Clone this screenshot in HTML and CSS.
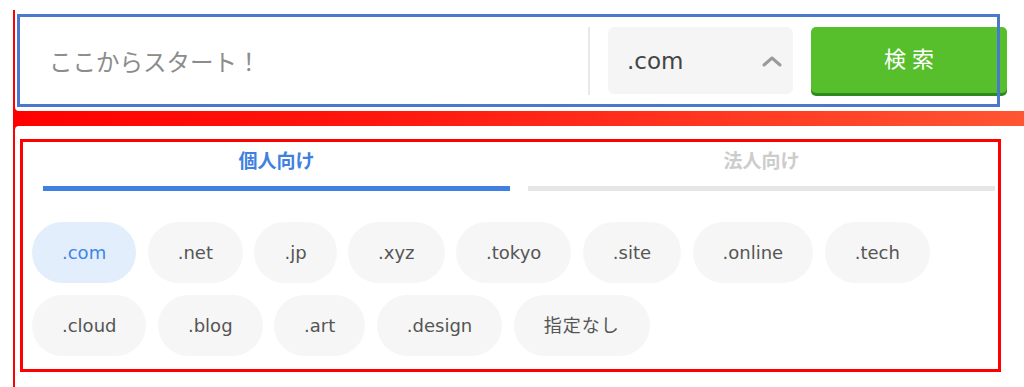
FILE: index.html
```html
<!DOCTYPE html>
<html lang="ja">
<head>
    <meta charset="UTF-8">
    <meta name="viewport" content="width=device-width, initial-scale=1.0">
    <title>ドメイン検索</title>
    <link rel="stylesheet" href="styles.css">
</head>
<body>

    <div class="domain-search">
        <!-- search bar -->
        <form class="search-bar" onsubmit="return false;">
            <input type="text" class="search-input" placeholder="ここからスタート！">
            <div class="tld-select">
                <span class="tld-select-value">.com</span>
                <svg class="tld-select-arrow" width="20" height="12" viewBox="0 0 20 12">
                    <polyline points="2,10 10,3 18,10" fill="none" stroke="#9a9a9a" stroke-width="3" stroke-linecap="round" stroke-linejoin="round"/>
                </svg>
            </div>
            <button type="submit" class="search-btn">検索</button>
            <span class="note-box note-blue"></span>
        </form>

        <!-- tld picker -->
        <div class="tld-panel">
            <div class="tabs">
                <div class="tab tab-active">個人向け</div>
                <div class="tab">法人向け</div>
            </div>
            <div class="chips">
                <span class="chip chip-active">.com</span>
                <span class="chip">.net</span>
                <span class="chip">.jp</span>
                <span class="chip">.xyz</span>
                <span class="chip">.tokyo</span>
                <span class="chip">.site</span>
                <span class="chip">.online</span>
                <span class="chip">.tech</span>
                <span class="chip">.cloud</span>
                <span class="chip">.blog</span>
                <span class="chip">.art</span>
                <span class="chip">.design</span>
                <span class="chip chip-jp">指定なし</span>
            </div>
            <span class="note-box note-red"></span>
        </div>
    </div>

</body>
</html>
```

FILE: styles.css
```css
body {
    margin: 0;
    font-family: "Noto Sans CJK JP", sans-serif;
    background-color: #FFFFFF;
}

.domain-search {
    display: flex;
    flex-direction: column;
    gap: 15px;
    margin: 10px 0 0 13px;
    padding-left: 2px;
    min-height: 377px;
    background: linear-gradient(90deg, #FF0000 0%, #FF1A10 40%, #FF5533 100%);
}

.search-bar {
    position: relative;
    display: flex;
    align-items: center;
    height: 101px;
    margin: 0;
    padding-right: 17px;
    background-color: #FFFFFF;
    border-radius: 0 0 0 4px;
}

.search-input {
    flex: 1;
    height: 68px;
    padding: 0 0 0 34px;
    border: none;
    border-right: 2px solid #E8E8E8;
    outline: none;
    font: inherit;
    font-size: 23.5px;
    color: #333333;
    background: transparent;
}

.search-input::placeholder {
    color: #8C8C8C;
}

.tld-select {
    display: flex;
    align-items: center;
    justify-content: space-between;
    box-sizing: border-box;
    width: 185px;
    height: 67px;
    margin-left: 18px;
    padding: 0 11px 0 19px;
    border-radius: 6px;
    background-color: #F5F5F5;
    font-family: "DejaVu Sans", "Noto Sans CJK JP", sans-serif;
    font-size: 23px;
    color: #444444;
}

.search-btn {
    width: 196px;
    height: 66px;
    margin-left: 18px;
    margin-top: -1px;
    padding: 0 0 6px 6px;
    border: none;
    border-radius: 5px;
    background-color: #57BF2B;
    box-shadow: 0 3px 0 #2E8A1E;
    font-family: "Noto Sans CJK JP", sans-serif;
    font-size: 22px;
    letter-spacing: 6px;
    color: #FFFFFF;
    cursor: pointer;
}

.tld-panel {
    position: relative;
    flex: 1;
    background-color: #FFFFFF;
    border-radius: 4px 0 0 0;
}

.tabs {
    display: flex;
    gap: 18px;
    padding: 0 29px 0 28px;
}

.tab {
    flex: 1;
    padding: 22px 0 14px;
    line-height: 24px;
    text-align: center;
    font-size: 19px;
    font-weight: bold;
    color: #CCCCCC;
    border-bottom: 5px solid #E6E6E6;
}

.tab-active {
    color: #3F80E0;
    border-bottom-color: #3F80E0;
}

.chips {
    display: flex;
    flex-wrap: wrap;
    gap: 12px 11.5px;
    margin-top: 31px;
    padding-left: 17px;
    padding-right: 60px;
}

.chip {
    height: 61px;
    line-height: 61px;
    padding: 0 30px;
    border-radius: 31px;
    background-color: #F6F6F6;
    font-family: "DejaVu Sans", "Noto Sans CJK JP", sans-serif;
    font-size: 18px;
    color: #555555;
}

.chip-jp {
    letter-spacing: 1px;
}

.chip-active {
    background-color: #E3EEFD;
    color: #3D86E8;
}

/* annotation frames over the content */
.note-box {
    position: absolute;
    box-sizing: border-box;
    pointer-events: none;
}

.note-blue {
    left: 2px;
    top: 4px;
    width: 983px;
    height: 93px;
    border: 3px solid #4A78CF;
}

.note-red {
    left: 5px;
    top: 13px;
    width: 981px;
    height: 233px;
    border: 3px solid #FF0000;
}
```
